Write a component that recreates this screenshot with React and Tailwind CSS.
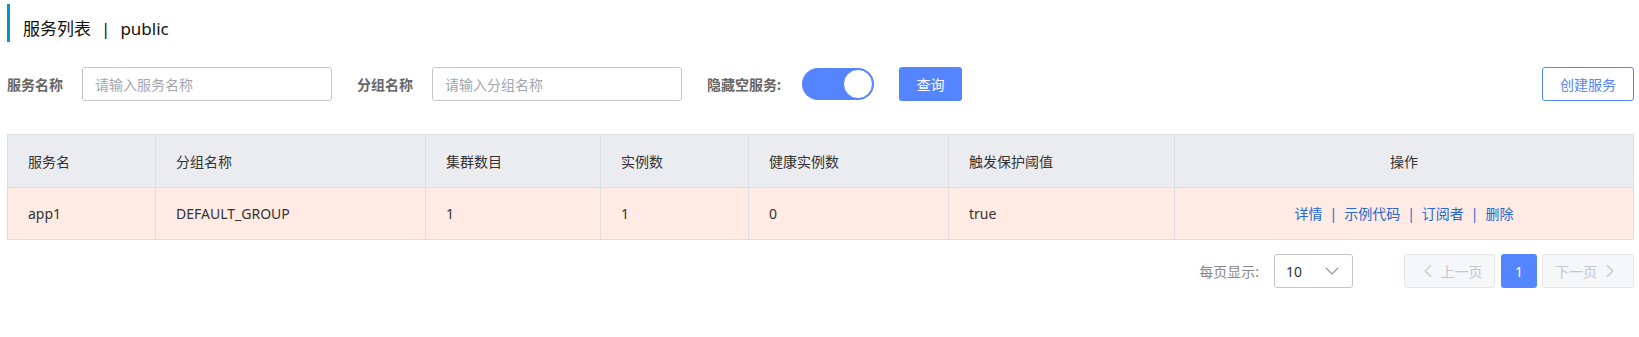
import { ChevronDown, ChevronLeft, ChevronRight } from "lucide-react";

const columns = [
  { title: "服务名", width: "w-[148px]" },
  { title: "分组名称", width: "w-[270px]" },
  { title: "集群数目", width: "w-[175px]" },
  { title: "实例数", width: "w-[148px]" },
  { title: "健康实例数", width: "w-[200px]" },
  { title: "触发保护阈值", width: "w-[226px]" },
  { title: "操作", width: "" },
];

const rows = [
  {
    name: "app1",
    group: "DEFAULT_GROUP",
    clusters: "1",
    instances: "1",
    healthy: "0",
    threshold: "true",
  },
];

const App = () => {
  return (
    <div className="min-h-screen bg-white pl-[7px] pr-[5px] pt-[4px] font-['Noto_Sans','Noto_Sans_CJK_SC',sans-serif] text-[#333]">
      {/* TITLE */}
      <div className="h-[38px] border-l-[3px] border-[#0099cc] pl-[13px] pt-[12px] flex items-center text-[17px] text-[#111]">
        <span>服务列表</span>
        <span className="mx-[10px]">|</span>
        <span>public</span>
      </div>

      {/* FILTERS */}
      <div className="mt-[25px] h-[34px] flex items-center text-[14px]">
        <div className="w-[75px] font-bold text-[#666]">服务名称</div>
        <input
          className="w-[250px] h-[34px] px-3 border border-[#c4c6cf] rounded-[3px] outline-none placeholder:text-[#a3a6b0]"
          placeholder="请输入服务名称"
        />
        <div className="ml-[25px] w-[75px] font-bold text-[#666]">分组名称</div>
        <input
          className="w-[250px] h-[34px] px-3 border border-[#c4c6cf] rounded-[3px] outline-none placeholder:text-[#a3a6b0]"
          placeholder="请输入分组名称"
        />
        <div className="ml-[25px] w-[95px] font-bold text-[#666]">隐藏空服务:</div>
        <div className="w-[72px] h-[32px] rounded-full bg-[#5584ff] flex items-center justify-end pr-[1px]">
          <div className="w-[30px] h-[30px] rounded-full bg-white border border-[#5584ff]" />
        </div>
        <button className="ml-[25px] w-[63px] h-[34px] rounded-[3px] bg-[#5584ff] text-white">
          查询
        </button>
        <button className="ml-auto w-[92px] h-[34px] rounded-[3px] border border-[#5584ff] text-[#5584ff] bg-white">
          创建服务
        </button>
      </div>

      {/* TABLE */}
      <table className="mt-[33px] w-full table-fixed border-collapse text-[14px]">
        <thead>
          <tr className="bg-[#ebecf0]">
            {columns.map((c, i) => (
              <th
                key={c.title}
                className={`${c.width} h-[53px] border border-[#dcdee3] px-[20px] font-normal ${
                  i === columns.length - 1 ? "text-center" : "text-left"
                }`}
              >
                {c.title}
              </th>
            ))}
          </tr>
        </thead>
        <tbody>
          {rows.map((r) => (
            <tr key={r.name} className="bg-[#ffebe4]">
              <td className="h-[52px] border border-[#dcdee3] px-[20px]">{r.name}</td>
              <td className="border border-[#dcdee3] px-[20px]">{r.group}</td>
              <td className="border border-[#dcdee3] px-[20px]">{r.clusters}</td>
              <td className="border border-[#dcdee3] px-[20px]">{r.instances}</td>
              <td className="border border-[#dcdee3] px-[20px]">{r.healthy}</td>
              <td className="border border-[#dcdee3] px-[20px]">{r.threshold}</td>
              <td className="border border-[#dcdee3] px-[20px] text-center text-[#2468d2]">
                <span>详情</span>
                <span className="mx-[7px]">|</span>
                <span>示例代码</span>
                <span className="mx-[7px]">|</span>
                <span>订阅者</span>
                <span className="mx-[7px]">|</span>
                <span>删除</span>
              </td>
            </tr>
          ))}
        </tbody>
      </table>

      {/* PAGINATION */}
      <div className="mt-[14px] h-[34px] flex items-center justify-end text-[14px]">
        <span className="text-[#888]">每页显示:</span>
        <div className="ml-[15px] w-[79px] h-[34px] border border-[#c4c6cf] rounded-[3px] flex items-center justify-between pl-[11px] pr-[8px] text-[#333]">
          <span>10</span>
          <ChevronDown size={24} strokeWidth={1.1} className="text-[#999]" />
        </div>
        <button className="ml-[51px] w-[91px] h-[34px] rounded-[3px] border border-[#e6e7eb] bg-[#f6f7f9] text-[#c4c6cf] flex items-center justify-center gap-[2px]">
          <ChevronLeft size={22} strokeWidth={1.3} />
          <span>上一页</span>
        </button>
        <button className="ml-[6px] w-[36px] h-[34px] rounded-[3px] bg-[#5584ff] text-white">
          1
        </button>
        <button className="ml-[5px] w-[92px] h-[34px] rounded-[3px] border border-[#e6e7eb] bg-[#f6f7f9] text-[#c4c6cf] flex items-center justify-center gap-[2px]">
          <span>下一页</span>
          <ChevronRight size={22} strokeWidth={1.3} />
        </button>
      </div>
    </div>
  );
};

export default App;
